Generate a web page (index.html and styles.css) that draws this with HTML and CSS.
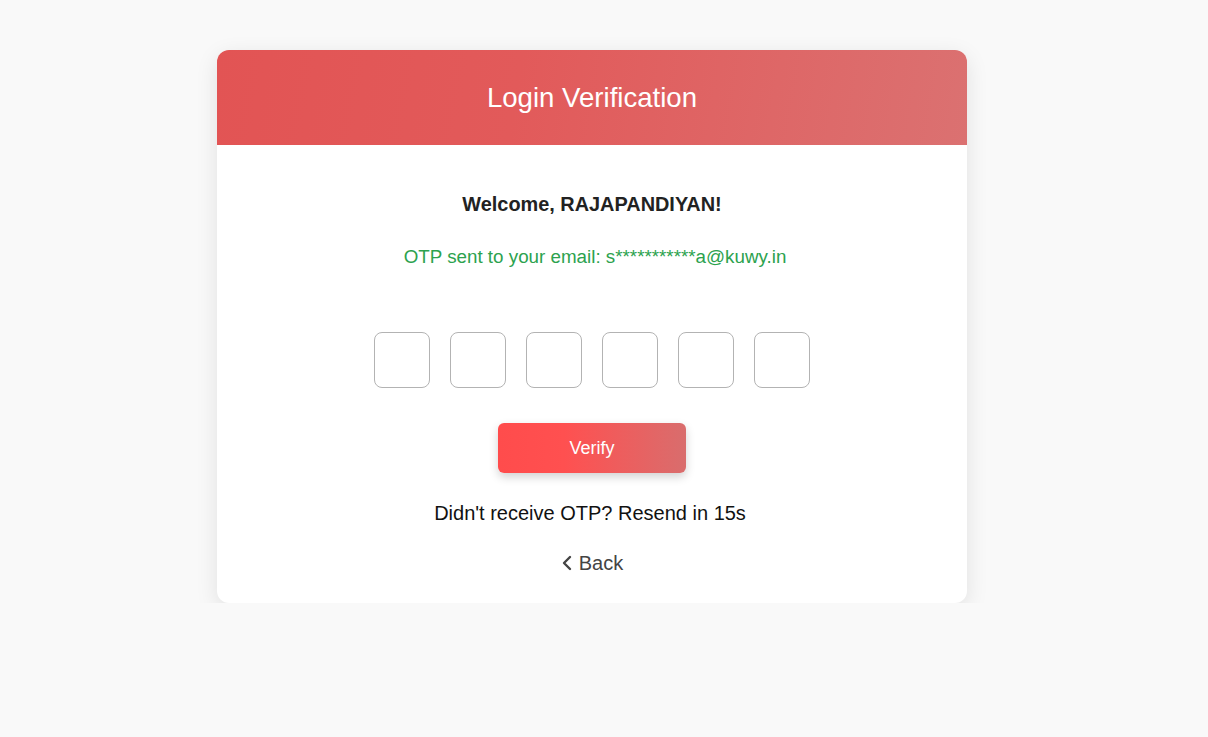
FILE: index.html
```html
<!DOCTYPE html>
<html>
<head>
<meta charset="utf-8">
<link rel="stylesheet" href="styles.css">
</head>
<body>
<div class="page">
  <div class="card">
    <div class="card-header">
      <h1 class="title">Login Verification</h1>
    </div>
    <div class="card-body">
      <div class="welcome">Welcome, RAJAPANDIYAN!</div>
      <div class="sent">OTP sent to your email: s***********a@kuwy.in</div>
      <div class="otp-row">
        <input class="otp" type="text" maxlength="1">
        <input class="otp" type="text" maxlength="1">
        <input class="otp" type="text" maxlength="1">
        <input class="otp" type="text" maxlength="1">
        <input class="otp" type="text" maxlength="1">
        <input class="otp" type="text" maxlength="1">
      </div>
      <button class="verify">Verify</button>
      <div class="resend">Didn't receive OTP? Resend in 15s</div>
      <a class="back" href="#">
        <svg class="chev" width="12" height="16" viewBox="0 0 12 16"><path d="M9 2 L3 8 L9 14" fill="none" stroke="#444" stroke-width="2.4" stroke-linecap="round" stroke-linejoin="round"/></svg>
        <span>Back</span>
      </a>
    </div>
  </div>
</div>
</body>
</html>
```
FILE: styles.css
```css
html, body {
  margin: 0;
  padding: 0;
  background: #f9f9f9;
  font-family: "Liberation Sans", Arial, sans-serif;
}
.page {
  display: flex;
  justify-content: center;
  padding-top: 50px;
  padding-right: 24px;
}
.card {
  width: 750px;
  background: #fff;
  border-radius: 12px;
  box-shadow: 0 6px 22px rgba(0,0,0,0.1);
  overflow: hidden;
}
.card-header {
  height: 95px;
  display: flex;
  align-items: center;
  justify-content: center;
  background: linear-gradient(100deg, #e25454 0%, #e25a5a 40%, #db7171 100%);
}
.title {
  margin: 0;
  color: #fff;
  font-weight: normal;
  font-size: 27.6px;
}
.card-body {
  display: flex;
  flex-direction: column;
  align-items: center;
  padding: 47px 0 28px;
}
.welcome {
  font-weight: bold;
  font-size: 19.9px;
  color: #222;
  line-height: 24px;
}
.sent {
  margin-top: 30px;
  padding-left: 6px;
  color: #2ca24e;
  font-size: 18.8px;
  line-height: 22px;
}
.otp-row {
  display: flex;
  gap: 20px;
  margin-top: 64px;
}
.otp {
  width: 56px;
  height: 56px;
  box-sizing: border-box;
  border: 1px solid #b3b3b3;
  border-radius: 8px;
  margin: 0;
  padding: 0;
  outline: none;
  background: #fff;
}
.verify {
  margin-top: 35px;
  width: 188px;
  height: 50px;
  border: none;
  border-radius: 6px;
  color: #fff;
  font-family: "Liberation Sans", Arial, sans-serif;
  font-size: 18px;
  background: linear-gradient(90deg, #ff4c4c 0%, #ff5050 35%, #d96d6d 100%);
  box-shadow: 0 4px 10px rgba(0,0,0,0.18);
}
.resend {
  margin-top: 28px;
  padding-right: 4px;
  font-size: 20px;
  color: #111;
  line-height: 24px;
}
.back {
  margin-top: 26px;
  display: flex;
  align-items: center;
  gap: 6px;
  color: #444;
  text-decoration: none;
  font-size: 20px;
  line-height: 24px;
}
```
